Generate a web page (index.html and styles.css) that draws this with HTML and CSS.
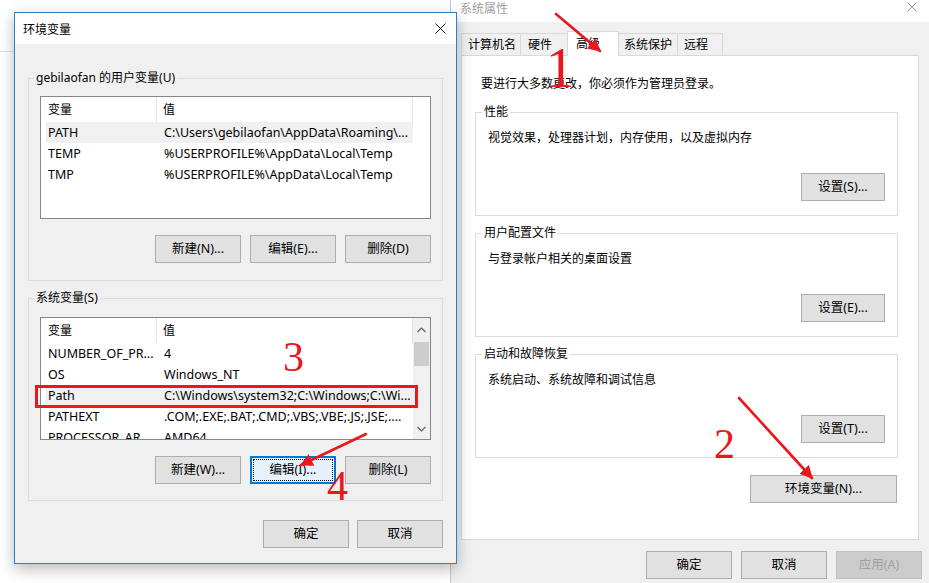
FILE: index.html
```html
<!DOCTYPE html>
<html lang="zh-CN">
<head>
<meta charset="utf-8">
<title>环境变量</title>
<link rel="stylesheet" href="styles.css">
</head>
<body>
<div class="desktop">
  <div class="bgwin"></div>

  <div class="win sysprops">
    <div class="sp-title">
      <span class="sp-title-text">系统属性</span>
      <svg class="sp-close" width="10" height="10" viewBox="0 0 10 10"><path d="M0.5 0.5 L9.5 9.5 M9.5 0.5 L0.5 9.5" stroke="#9a9a9a" stroke-width="1" fill="none"/></svg>
    </div>
    <div class="tabs">
      <div class="tab t1">计算机名</div>
      <div class="tab t2">硬件</div>
      <div class="tab t3 active">高级</div>
      <div class="tab t4">系统保护</div>
      <div class="tab t5">远程</div>
    </div>
    <div class="panel">
      <div class="intro">要进行大多数更改，你必须作为管理员登录。</div>
      <fieldset class="sgrp">
        <legend>性能</legend>
        <div class="sgrp-text">视觉效果，处理器计划，内存使用，以及虚拟内存</div>
        <div class="sgrp-btns"><button class="btn btn-s">设置(S)...</button></div>
      </fieldset>
      <fieldset class="sgrp">
        <legend>用户配置文件</legend>
        <div class="sgrp-text">与登录帐户相关的桌面设置</div>
        <div class="sgrp-btns"><button class="btn btn-s">设置(E)...</button></div>
      </fieldset>
      <fieldset class="sgrp">
        <legend>启动和故障恢复</legend>
        <div class="sgrp-text">系统启动、系统故障和调试信息</div>
        <div class="sgrp-btns"><button class="btn btn-s">设置(T)...</button></div>
      </fieldset>
      <div class="envrow"><button class="btn btn-env">环境变量(N)...</button></div>
    </div>
    <div class="sp-foot">
      <button class="btn">确定</button>
      <button class="btn">取消</button>
      <button class="btn disabled">应用(A)</button>
    </div>
  </div>

  <div class="win envdlg">
    <div class="ed-title">
      <span>环境变量</span>
      <svg class="ed-close" width="11" height="11" viewBox="0 0 11 11"><path d="M0.5 0.5 L10.5 10.5 M10.5 0.5 L0.5 10.5" stroke="#111" stroke-width="1" fill="none"/></svg>
    </div>
    <div class="ed-body">
      <fieldset class="grp g-user">
        <legend>gebilaofan 的用户变量(U)</legend>
        <div class="lv">
          <div class="lv-main">
            <div class="lv-head"><div class="c1">变量</div><div class="c2">值</div></div>
            <div class="lv-row sel"><div class="c1">PATH</div><div class="c2">C:\Users\gebilaofan\AppData\Roaming\...</div></div>
            <div class="lv-row"><div class="c1">TEMP</div><div class="c2">%USERPROFILE%\AppData\Local\Temp</div></div>
            <div class="lv-row"><div class="c1">TMP</div><div class="c2">%USERPROFILE%\AppData\Local\Temp</div></div>
          </div>
          <div class="lv-gap"></div>
        </div>
        <div class="btnrow">
          <button class="btn">新建(N)...</button>
          <button class="btn">编辑(E)...</button>
          <button class="btn">删除(D)</button>
        </div>
      </fieldset>

      <fieldset class="grp g-sys">
        <legend>系统变量(S)</legend>
        <div class="lv">
          <div class="lv-main">
            <div class="lv-head"><div class="c1">变量</div><div class="c2">值</div></div>
            <div class="lv-row"><div class="c1">NUMBER_OF_PR...</div><div class="c2">4</div></div>
            <div class="lv-row"><div class="c1">OS</div><div class="c2">Windows_NT</div></div>
            <div class="lv-row sel"><div class="c1">Path</div><div class="c2">C:\Windows\system32;C:\Windows;C:\Wi...</div></div>
            <div class="lv-row"><div class="c1">PATHEXT</div><div class="c2">.COM;.EXE;.BAT;.CMD;.VBS;.VBE;.JS;.JSE;....</div></div>
            <div class="lv-row"><div class="c1">PROCESSOR_AR...</div><div class="c2">AMD64</div></div>
          </div>
          <div class="sb">
            <div class="sb-btn"><svg width="9" height="6" viewBox="0 0 9 6"><path d="M0.5 5 L4.5 1 L8.5 5" stroke="#606060" stroke-width="1.2" fill="none"/></svg></div>
            <div class="sb-thumb"></div>
            <div class="sb-track"></div>
            <div class="sb-btn"><svg width="9" height="6" viewBox="0 0 9 6"><path d="M0.5 1 L4.5 5 L8.5 1" stroke="#606060" stroke-width="1.2" fill="none"/></svg></div>
          </div>
        </div>
        <div class="btnrow">
          <button class="btn">新建(W)...</button>
          <button class="btn focus">编辑(I)...</button>
          <button class="btn">删除(L)</button>
        </div>
      </fieldset>

      <div class="ed-foot">
        <button class="btn">确定</button>
        <button class="btn">取消</button>
      </div>
    </div>
  </div>

  <svg class="annot" width="929" height="583" viewBox="0 0 929 583">
    <defs>
      <marker id="ah" viewBox="0 0 10 10" refX="9" refY="5" markerWidth="5" markerHeight="5" orient="auto" markerUnits="strokeWidth">
        <path d="M0 0 L10 5 L0 10 Z" fill="#e8181d"/>
      </marker>
    </defs>
    <g stroke="#e8181d" stroke-width="2.6" fill="none" stroke-linecap="round">
      <line x1="556" y1="14" x2="600" y2="51" marker-end="url(#ah)"/>
      <line x1="739" y1="398" x2="812" y2="478" marker-end="url(#ah)"/>
      <line x1="366" y1="434" x2="301" y2="465" marker-end="url(#ah)"/>
    </g>
    <rect x="36.5" y="386.5" width="380" height="20" fill="none" stroke="#e8181d" stroke-width="3"/>
    <g class="num" fill="#e8181d">
      <text x="546" y="87">1</text>
      <text x="714" y="458" class="n2">2</text>
      <text x="283" y="371" class="n2">3</text>
      <text x="327" y="500" class="n2">4</text>
    </g>
  </svg>
</div>
</body>
</html>
```

FILE: styles.css
```css
* { box-sizing: border-box; }
html, body { margin: 0; padding: 0; }
body {
  width: 929px;
  height: 583px;
  overflow: hidden;
  background: #ffffff;
  font-family: "Noto Sans", "Noto Sans CJK SC", sans-serif;
  font-size: 12px;
  color: #000;
}
.desktop {
  position: relative;
  width: 929px;
  height: 583px;
  overflow: hidden;
}
.bgwin {
  position: absolute;
  left: 0;
  top: 0;
  width: 450px;
  height: 52px;
  border-bottom: 1px solid #e2e2e2;
  background: #fff;
}
.win { position: absolute; }

/* ---------- System properties window ---------- */
.sysprops {
  left: 450px;
  top: 0;
  width: 479px;
  height: 583px;
  border-left: 1px solid #c9c9c9;
  background: #f0f0f0;
  display: flex;
  flex-direction: column;
}
.sp-title {
  height: 22px;
  background: #fff;
  display: flex;
  justify-content: space-between;
  align-items: flex-start;
  padding: 1px 12px 0 9px;
}
.sp-title-text {
  color: #a2a2a2;
  font-family: "Noto Sans CJK SC", sans-serif;
  line-height: 13px;
}
.sp-close { margin-top: 1px; }
.tabs {
  display: flex;
  align-items: flex-end;
  height: 24px;
  margin-top: 9px;
  padding-left: 10px;
  position: relative;
  z-index: 1;
}
.tab {
  height: 22px;
  border: 1px solid #d9d9d9;
  border-bottom: none;
  background: #f0f0f0;
  padding-left: 6px;
  line-height: 20px;
  font-family: "Noto Sans CJK SC", sans-serif;
  margin-right: -1px;
}
.t1 { width: 60px; }
.t2 { width: 48px; padding-left: 7px; }
.t3 { width: 52px; padding-left: 8px; }
.t4 { width: 60px; padding-left: 5px; }
.t5 { width: 46px; }
.tab.active {
  height: 25px;
  background: #fff;
  margin-bottom: -1px;
  line-height: 21px;
}
.panel {
  margin: 0 10px;
  height: 485px;
  background: #fff;
  border: 1px solid #d9d9d9;
  padding: 19px 20px 0 13px;
}
.intro {
  font-family: "Noto Sans CJK SC", sans-serif;
  line-height: 16px;
  padding-left: 6px;
  margin-bottom: 13px;
}
fieldset {
  margin: 0;
  min-width: 0;
  border: 1px solid #dcdcdc;
}
legend {
  padding: 0 2px;
  margin-left: -6px;
  line-height: 16px;
  font-family: "Noto Sans", "Noto Sans CJK SC", sans-serif;
}
.sgrp {
  height: 112px;
  padding: 9px 12px 0 12px;
  margin-bottom: 9px;
}
.sgrp-text {
  font-family: "Noto Sans CJK SC", sans-serif;
  line-height: 16px;
}
.sgrp-btns {
  display: flex;
  justify-content: flex-end;
  margin-top: 28px;
}
.envrow {
  display: flex;
  justify-content: flex-end;
  padding-right: 1px;
  margin-top: 17px;
}
.sp-foot {
  display: flex;
  justify-content: flex-end;
  gap: 9px;
  padding: 11px 7px 0 0;
}

/* ---------- Buttons ---------- */
.btn {
  width: 86px;
  height: 28px;
  border: 1px solid #adadad;
  background: #e1e1e1;
  font-family: "Noto Sans", "Noto Sans CJK SC", sans-serif;
  font-size: 12.5px;
  color: #000;
  padding: 0;
  margin: 0;
  line-height: 16px;
}
.btn.btn-s { width: 84px; }
.btn.btn-env { width: 147px; }
.btn.disabled {
  color: #a0a0a0;
  background: #cccccc;
  border-color: #bfbfbf;
}
.btn.focus {
  border-color: #0078d7;
  box-shadow: inset 0 0 0 1px #0078d7;
  background: #e5f1fb;
  outline: 1px dotted #000;
  outline-offset: -4px;
}

/* ---------- Environment variables dialog ---------- */
.envdlg {
  left: 14px;
  top: 12px;
  width: 443px;
  height: 552px;
  border: 1px solid #2f7fc4;
  background: #f0f0f0;
  box-shadow: 0 5px 14px rgba(0, 0, 0, 0.28);
  display: flex;
  flex-direction: column;
  z-index: 2;
}
.ed-title {
  height: 31px;
  flex: none;
  background: #fff;
  display: flex;
  justify-content: space-between;
  align-items: center;
  padding: 0 10px 0 8px;
  font-family: "Noto Sans CJK SC", sans-serif;
}
.ed-title span { margin-top: -1px; }
.ed-body {
  padding: 26px 13px 0 13px;
}
.grp {
  padding: 10px 11px 0 11px;
}
.g-user { height: 211px; margin-bottom: 9px; }
.g-sys { height: 211px; }
.g-sys .lv { margin-top: 1px; }
.lv {
  height: 123px;
  background: #fff;
  border: 1px solid #828790;
  display: flex;
  overflow: hidden;
}
.lv-main {
  width: 372px;
  flex: none;
}
.lv-gap { flex: 1; }
.lv-head {
  display: flex;
  height: 25px;
  align-items: center;
  font-family: "Noto Sans CJK SC", sans-serif;
}
.lv-head .c1 {
  width: 116px;
  padding-left: 7px;
  border-right: 1px solid #e5e5e5;
  height: 25px;
  line-height: 24px;
}
.lv-head .c2 {
  flex: 1;
  padding-left: 6px;
  border-right: 1px solid #e5e5e5;
  height: 25px;
  line-height: 24px;
}
.lv-row {
  display: flex;
  height: 21px;
  line-height: 21px;
  margin-left: 5px;
  white-space: nowrap;
  font-size: 12.5px;
}
.lv-row.sel { background: #f0f0f0; }
.lv-row .c1 { width: 111px; padding-left: 2px; overflow: hidden; }
.lv-row .c2 { flex: 1; padding-left: 7px; overflow: hidden; }
.sb {
  width: 17px;
  flex: none;
  background: #f0f0f0;
  display: flex;
  flex-direction: column;
}
.sb-btn {
  height: 24px;
  display: flex;
  align-items: center;
  justify-content: center;
}
.sb-btn:last-child { height: 21px; }
.sb-thumb {
  height: 24px;
  margin: 0 1px;
  background: #cdcdcd;
}
.sb-track { flex: 1; }
.btnrow {
  display: flex;
  justify-content: flex-end;
  gap: 9px;
  margin-top: 16px;
  padding-right: 0;
}
.ed-foot {
  display: flex;
  justify-content: flex-end;
  gap: 8px;
  margin-top: 19px;
}

/* ---------- Annotations ---------- */
.annot {
  position: absolute;
  left: 0;
  top: 0;
  z-index: 5;
  pointer-events: none;
}
.num text {
  font-family: "Liberation Serif", serif;
  font-size: 56px;
}
.num text.n2 { font-size: 42px; }
```
